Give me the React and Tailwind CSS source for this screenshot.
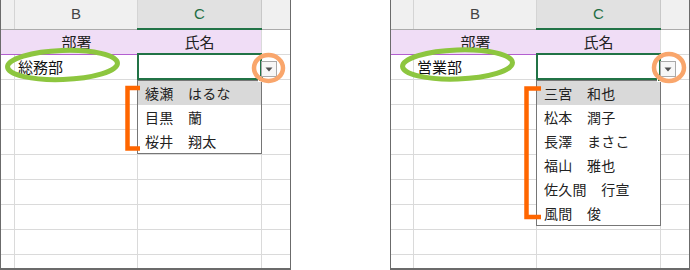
import React from 'react';

const LAV = 'bg-[#f0ddf6]';
const PURPLE = 'border-[#b35fd0]';
const GRID = 'border-[#dadada]';

const Arrow = () => (
    <svg width="8" height="5" viewBox="0 0 8 5">
        <path d="M0.5 0.5h7l-3.5 4z" fill="#505050" />
    </svg>
);

const Panel = ({ width, aCol, dept, names, marks }) => {
    const { ellipse, ring, bracket } = marks;
    const plainRows = [3, 4, 5, 6, 7, 8, 9];

    return (
        <div className={`relative ${width} h-[270px] flex flex-col border-x border-b-2 border-[#6b6b6b]`}>
            {/* column headers */}
            <div className="h-[30px] flex border-b border-[#ababab] text-[15px]">
                <div className={`${aCol} bg-[#f0f0f0] border-r border-[#d4d4d4]`} />
                <div className="w-[123px] bg-[#f0f0f0] border-r border-[#d4d4d4] flex items-center justify-center text-[#444] font-['Liberation_Sans',sans-serif]">
                    B
                </div>
                <div className="relative w-[124px] bg-[#e1e1e1] border-r border-[#c8c8c8] flex items-center justify-center text-[#1e6e43] font-['Liberation_Sans',sans-serif]">
                    C
                    <div className="absolute -left-px -right-px -bottom-px h-[2px] bg-[#217346]" />
                </div>
                <div className="flex-1 bg-[#f0f0f0]" />
            </div>

            {/* row 1: titles */}
            <div className="h-[25px] flex text-[15px] text-[#222]">
                <div className={`${aCol} ${LAV} border-b ${PURPLE}`} />
                <div className={`w-[123px] ${LAV} border-b ${PURPLE} flex items-center justify-center`}>部署</div>
                <div className={`w-[124px] ${LAV} border-b ${PURPLE} border-r ${GRID} flex items-center justify-center`}>氏名</div>
                <div className={`flex-1 border-b ${GRID}`} />
            </div>

            {/* row 2: selected cell with its list */}
            <div className="h-[25px] flex text-[15px] text-[#111]">
                <div className={`${aCol} border-r ${GRID} border-b ${PURPLE}`} />
                <div className={`w-[123px] border-r ${GRID} border-b ${PURPLE} flex items-center pl-[3px]`}>{dept}</div>
                <div className={`relative w-[124px] border-r ${GRID} border-b ${PURPLE}`}>
                    <div className="absolute -left-px -top-[2px] -right-px -bottom-px border-2 border-[#217346] z-30">
                        <div className="absolute -right-[4px] -bottom-[4px] w-[6px] h-[6px] bg-[#217346] border border-white" />
                    </div>
                    <div className="absolute -left-px top-[25px] w-[125px] bg-white border border-[#767676] z-20 text-[14px] tracking-[0.3px] text-[#222]">
                        {names.map((n, i) => (
                            <div key={n} className={`h-[24px] flex items-center pl-[7px] whitespace-pre ${i === 0 ? 'bg-[#d9d9d9]' : ''}`}>
                                {n}
                            </div>
                        ))}
                    </div>
                </div>
                <div className={`relative flex-1 border-b ${GRID}`}>
                    <div className="absolute -left-px top-[6px] w-[16px] h-[16px] bg-[#f7f7f7] border border-[#a9a9a9] flex items-center justify-center z-30">
                        <Arrow />
                    </div>
                </div>
            </div>

            {plainRows.map((r) => {
                const line = r <= 7 ? PURPLE : GRID;
                return (
                    <div key={r} className="h-[25px] flex">
                        <div className={`${aCol} border-r ${GRID} border-b ${line}`} />
                        <div className={`w-[123px] border-r ${GRID} border-b ${line}`} />
                        <div className={`w-[124px] border-r ${GRID} border-b ${line}`} />
                        <div className={`flex-1 border-b ${GRID}`} />
                    </div>
                );
            })}

            <div className="flex-1 flex">
                <div className={`${aCol} border-r ${GRID}`} />
                <div className={`w-[123px] border-r ${GRID}`} />
                <div className={`w-[124px] border-r ${GRID}`} />
                <div className="flex-1" />
            </div>

            {/* annotations */}
            <svg
                className="absolute -left-px top-0 pointer-events-none z-40"
                width={marks.w}
                height="270"
                viewBox={`0 0 ${marks.w} 270`}
            >
                <ellipse cx={ellipse[0]} cy={ellipse[1]} rx={ellipse[2]} ry={ellipse[3]} fill="none" stroke="#8dc63f" strokeWidth="5" transform={`rotate(-2 ${ellipse[0]} ${ellipse[1]})`} />
                <ellipse cx={ring[0]} cy={ring[1]} rx={ring[2]} ry={ring[3]} fill="none" stroke="#f9a66c" strokeWidth="4.5" />
                <polyline points={bracket} fill="none" stroke="#ff6600" strokeWidth="4.5" strokeLinejoin="miter" />
            </svg>
        </div>
    );
};

const App = () => {
    return (
        <div className="w-[690px] h-[270px] bg-white flex justify-between font-['Noto_Sans_CJK_JP',sans-serif]">
            <Panel
                width="w-[291px]"
                aCol="w-[14px]"
                dept="総務部"
                names={['綾瀬　はるな', '目黒　蘭', '桜井　翔太']}
                marks={{
                    w: 291,
                    ellipse: [62.5, 65, 55, 14.5],
                    ring: [268.5, 68, 14.5, 13],
                    bracket: '140,88 127.5,88 127.5,148.5 140,148.5',
                }}
            />
            <Panel
                width="w-[300px]"
                aCol="w-[23px]"
                dept="営業部"
                names={['三宮　和也', '松本　潤子', '長澤　まさこ', '福山　雅也', '佐久間　行宣', '風間　俊']}
                marks={{
                    w: 300,
                    ellipse: [67.5, 64.5, 55, 14.5],
                    ring: [279, 67.5, 15, 13.5],
                    bracket: '151,88.5 136.5,88.5 136.5,217 151,217',
                }}
            />
        </div>
    );
};

export default App;
